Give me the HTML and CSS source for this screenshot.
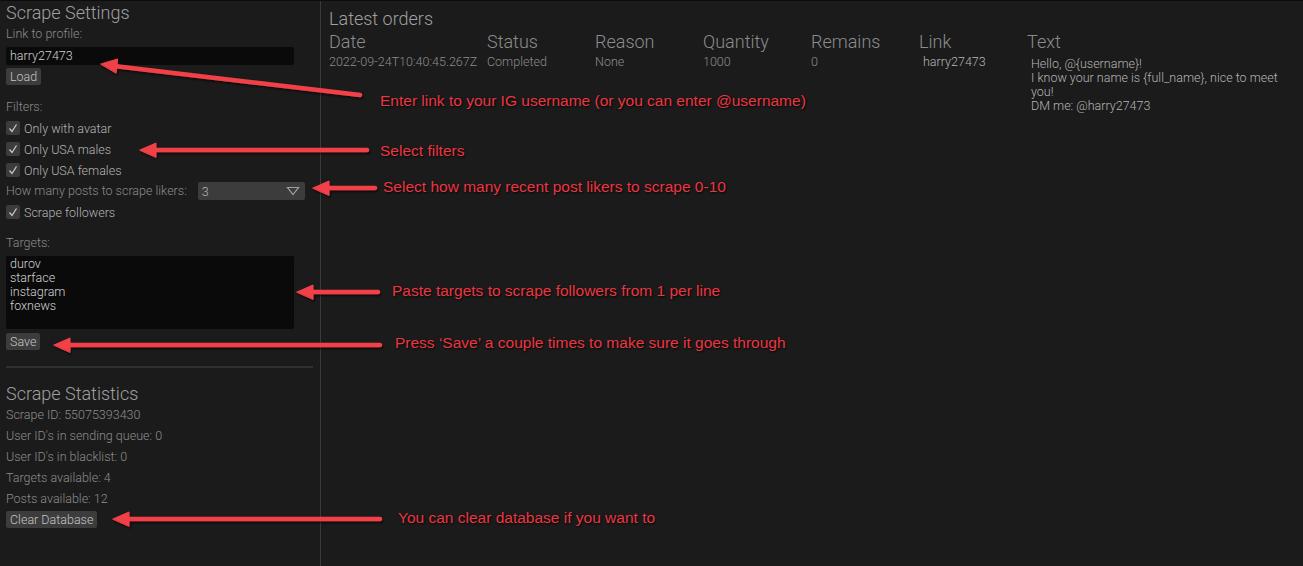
FILE: index.html
```html
<!DOCTYPE html>
<html>
<head>
<meta charset="utf-8">
<link rel="stylesheet" href="styles.css">
</head>
<body>
<div class="app">
  <aside class="left">
    <h1 class="heading">Scrape Settings</h1>
    <div class="label l-link">Link to profile:</div>
    <div class="input">harry27473</div>
    <div class="btn b-load">Load</div>
    <div class="label l-filters">Filters:</div>
    <div class="check c-first"><span class="box"><svg viewBox="0 0 14 14" width="14" height="14"><path d="M3.5 7.5 L6 10.5 L10.5 3.5" fill="none" stroke="#c8c8c8" stroke-width="1.3"/></svg></span>Only with avatar</div>
    <div class="check"><span class="box"><svg viewBox="0 0 14 14" width="14" height="14"><path d="M3.5 7.5 L6 10.5 L10.5 3.5" fill="none" stroke="#c8c8c8" stroke-width="1.3"/></svg></span>Only USA males</div>
    <div class="check"><span class="box"><svg viewBox="0 0 14 14" width="14" height="14"><path d="M3.5 7.5 L6 10.5 L10.5 3.5" fill="none" stroke="#c8c8c8" stroke-width="1.3"/></svg></span>Only USA females</div>
    <div class="combo-row"><span class="label">How many posts to scrape likers:</span><span class="combo"><span>3</span><svg viewBox="0 0 14 10" width="14" height="10"><path d="M1.5 1.5 H12.5 L7 8.5 Z" fill="none" stroke="#a0a0a0" stroke-width="1.2"/></svg></span></div>
    <div class="check"><span class="box"><svg viewBox="0 0 14 14" width="14" height="14"><path d="M3.5 7.5 L6 10.5 L10.5 3.5" fill="none" stroke="#c8c8c8" stroke-width="1.3"/></svg></span>Scrape followers</div>
    <div class="label l-targets">Targets:</div>
    <div class="textarea">durov<br>starface<br>instagram<br>foxnews</div>
    <div class="btn b-save">Save</div>
    <div class="sep"></div>
    <h1 class="heading h-stats">Scrape Statistics</h1>
    <div class="label stat s-first">Scrape ID: 55075393430</div>
    <div class="label stat">User ID's in sending queue: 0</div>
    <div class="label stat">User ID's in blacklist: 0</div>
    <div class="label stat">Targets available: 4</div>
    <div class="label stat">Posts available: 12</div>
    <div class="btn b-clear">Clear Database</div>
  </aside>
  <main class="right">
    <h1 class="heading h-orders">Latest orders</h1>
    <div class="table">
      <div class="th">Date</div>
      <div class="th">Status</div>
      <div class="th">Reason</div>
      <div class="th">Quantity</div>
      <div class="th">Remains</div>
      <div class="th">Link</div>
      <div class="th">Text</div>
      <div class="td">2022-09-24T10:40:45.267Z</div>
      <div class="td">Completed</div>
      <div class="td">None</div>
      <div class="td">1000</div>
      <div class="td">0</div>
      <div class="td td-link">harry27473</div>
      <div class="td td-text">Hello, @{username}!<br>I know your name is {full_name}, nice to meet you!<br>DM me: @harry27473</div>
    </div>
  </main>
</div>

<svg class="arrows" width="1303" height="566" viewBox="0 0 1303 566">
  <defs>
    <filter id="sh" x="-10%" y="-50%" width="120%" height="200%">
      <feDropShadow dx="1" dy="1.5" stdDeviation="1.2" flood-color="#000" flood-opacity="0.75"/>
    </filter>
  </defs>
  <g fill="#f2414a" stroke="#f2414a" stroke-linecap="round" stroke-linejoin="round" filter="url(#sh)">
    <line x1="360" y1="95" x2="114" y2="66" stroke-width="4.5"/>
    <polygon points="101,64 117.7,58.9 116.1,72.8" stroke-width="1"/>
    <line x1="367" y1="150" x2="152" y2="150" stroke-width="4.5"/>
    <polygon points="140,150 156,143 156,157" stroke-width="1"/>
    <line x1="375" y1="188" x2="325" y2="188" stroke-width="4.5"/>
    <polygon points="313,188 329,181 329,195" stroke-width="1"/>
    <line x1="378" y1="292" x2="309" y2="292" stroke-width="4.5"/>
    <polygon points="297,292 313,285 313,299" stroke-width="1"/>
    <line x1="380" y1="345" x2="66" y2="345" stroke-width="4.5"/>
    <polygon points="54,345 70,338 70,352" stroke-width="1"/>
    <line x1="380" y1="519" x2="125" y2="519" stroke-width="4.5"/>
    <polygon points="113,519 129,512 129,526" stroke-width="1"/>
  </g>
</svg>
<div class="note n1">Enter link to your IG username (or you can enter @username)</div>
<div class="note n2">Select filters</div>
<div class="note n3">Select how many recent post likers to scrape 0-10</div>
<div class="note n4">Paste targets to scrape followers from 1 per line</div>
<div class="note n5">Press ‘Save’ a couple times to make sure it goes through</div>
<div class="note n6">You can clear database if you want to</div>
</body>
</html>
```

FILE: styles.css
```css
* { box-sizing: border-box; }
html, body {
  margin: 0;
  padding: 0;
  width: 1303px;
  height: 566px;
  overflow: hidden;
  background: #1b1b1b;
}
body {
  position: relative;
  font-family: Roboto, "Liberation Sans", sans-serif;
  font-weight: 300;
  font-size: 12.5px;
  color: #8c8c8c;
}
.app {
  display: grid;
  grid-template-columns: 321px 1fr;
  height: 566px;
  border-top: 1px solid #0c0c0c;
}
.left {
  border-right: 1px solid #3a3a3a;
  padding: 2px 6px 0 6px;
  display: flex;
  flex-direction: column;
  align-items: flex-start;
}
.heading {
  margin: 0;
  font-size: 18px;
  line-height: 20px;
  font-weight: 300;
  color: #a0a0a0;
  white-space: nowrap;
}
.label {
  line-height: 16px;
  color: #8c8c8c;
  white-space: nowrap;
}
.l-link { margin-top: 3px; }
.input {
  margin-top: 5px;
  width: 288px;
  height: 18px;
  background: #0a0a0a;
  border-radius: 2px;
  padding-left: 4px;
  line-height: 18px;
  color: #d2d2d2;
}
.btn {
  background: #3c3c3c;
  border-radius: 2px;
  color: #c4c4c4;
  height: 17px;
  line-height: 17px;
  padding: 0 4px;
  white-space: nowrap;
}
.b-load { margin-top: 3px; }
.l-filters { margin-top: 14px; }
.check {
  display: flex;
  align-items: center;
  gap: 4px;
  height: 18px;
  margin-top: 3px;
  color: #b4b4b4;
  white-space: nowrap;
}
.check.c-first { margin-top: 4px; }
.box {
  width: 14px;
  height: 14px;
  background: #3c3c3c;
  border-radius: 2px;
  display: block;
}
.box svg { display: block; }
.combo-row {
  display: flex;
  align-items: center;
  gap: 11px;
  height: 18px;
  margin-top: 3px;
}
.combo {
  width: 107px;
  height: 18px;
  background: #3c3c3c;
  border-radius: 2px;
  display: flex;
  align-items: center;
  justify-content: space-between;
  padding: 0 5px 0 4px;
  color: #b4b4b4;
}
.combo svg { display: block; }
.l-targets { margin-top: 14px; }
.textarea {
  margin-top: 5px;
  width: 288px;
  height: 73px;
  background: #0a0a0a;
  border-radius: 2px;
  padding: 1px 4px;
  line-height: 14px;
  color: #d2d2d2;
}
.b-save { margin-top: 4px; }
.sep {
  margin-top: 16px;
  width: 307px;
  height: 2px;
  background: #303030;
}
.h-stats { margin-top: 16px; }
.stat { margin-top: 5px; }
.stat.s-first { margin-top: 3px; }
.b-clear { margin-top: 4px; }

.right {
  padding: 8px 0 0 8px;
}
.h-orders { line-height: 20px; }
.table {
  display: grid;
  grid-template-columns: 158px 108px 108px 108px 108px 108px 270px;
  align-items: start;
  margin-top: 3px;
}
.th {
  font-size: 18px;
  line-height: 20px;
  color: #8c8c8c;
  white-space: nowrap;
}
.td {
  line-height: 16px;
  margin-top: 2px;
  white-space: nowrap;
  color: #8c8c8c;
}
.td-link { padding-left: 4px; color: #b4b4b4; }
.td-text {
  padding-left: 4px;
  padding-top: 3px;
  line-height: 14px;
  white-space: normal;
  color: #b4b4b4;
  width: 264px;
}

.arrows {
  position: absolute;
  left: 0;
  top: 0;
  pointer-events: none;
}
.note {
  position: absolute;
  font-family: "Liberation Sans", Arial, sans-serif;
  font-weight: 400;
  font-size: 15.5px;
  line-height: 18px;
  color: #ec3642;
  text-shadow: 1px 1px 2px rgba(0,0,0,0.85);
  white-space: nowrap;
}
.n1 { left: 380px; top: 92px; }
.n2 { left: 380px; top: 142px; }
.n3 { left: 383px; top: 178px; }
.n4 { left: 392px; top: 282px; }
.n5 { left: 395px; top: 334px; }
.n6 { left: 398px; top: 509px; }
```
